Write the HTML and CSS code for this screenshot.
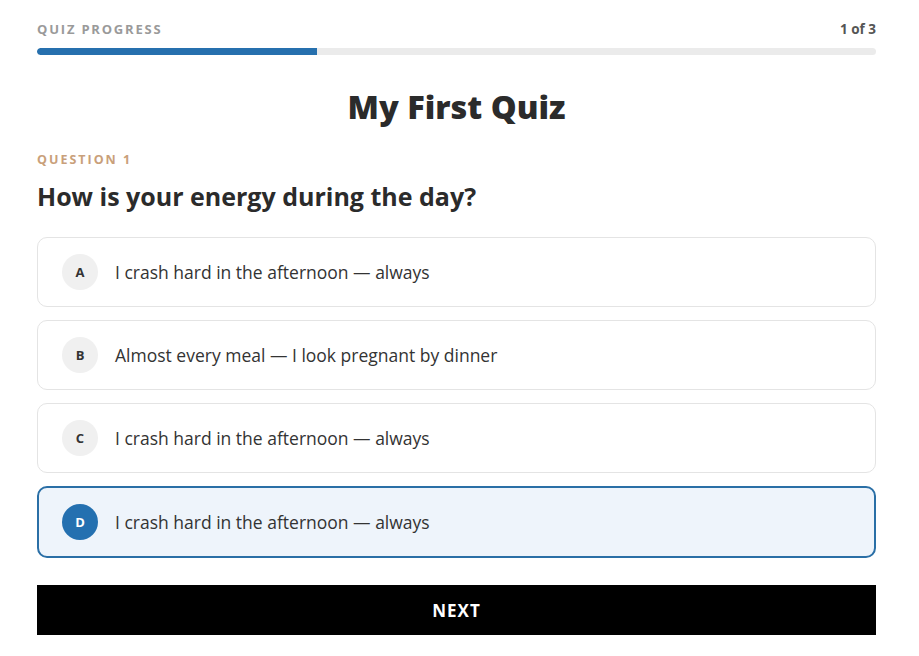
FILE: index.html
```html
<!DOCTYPE html>
<html>
<head>
    <title>My First Quiz</title>
    <link rel="stylesheet" href="styles.css">
</head>
<body>
    <div id="quiz">
        <div class="progress-head">
            <span class="progress-label">QUIZ PROGRESS</span>
            <span class="progress-count">1 of 3</span>
        </div>
        <div class="progress-track">
            <div class="progress-fill" style="width: 33.33%;"></div>
        </div>

        <h1 class="quiz-title">My First Quiz</h1>

        <div class="question-number">QUESTION 1</div>
        <h2 class="question-text">How is your energy during the day?</h2>

        <div class="options">
            <div class="option">
                <span class="badge">A</span>
                <span class="option-text">I crash hard in the afternoon — always</span>
            </div>
            <div class="option">
                <span class="badge">B</span>
                <span class="option-text">Almost every meal — I look pregnant by dinner</span>
            </div>
            <div class="option">
                <span class="badge">C</span>
                <span class="option-text">I crash hard in the afternoon — always</span>
            </div>
            <div class="option selected">
                <span class="badge">D</span>
                <span class="option-text">I crash hard in the afternoon — always</span>
            </div>
        </div>

        <button class="next-btn">NEXT</button>
    </div>
</body>
</html>
```

FILE: styles.css
```css
body {
    font-family: "Open Sans", Arial, sans-serif;
    margin: 0;
    padding: 0;
    background-color: #ffffff;
    color: #2b2b2b;
}
#quiz {
    padding: 20px 43px 20px 37px;
}
.progress-head {
    display: flex;
    justify-content: space-between;
    align-items: center;
    height: 18px;
}
.progress-label {
    font-size: 13px;
    font-weight: 700;
    letter-spacing: 1.8px;
    color: #9a9a9a;
}
.progress-count {
    font-size: 13.5px;
    font-weight: 700;
    color: #555;
}
.progress-track {
    margin-top: 10px;
    height: 7px;
    background-color: #ebebeb;
    border-radius: 4px;
    overflow: hidden;
}
.progress-fill {
    height: 100%;
    background-color: #2670ae;
    border-radius: 4px 0 0 4px;
}
.quiz-title {
    margin: 30px 0 0;
    text-align: center;
    font-size: 32.5px;
    font-weight: 800;
    line-height: 44px;
    color: #2b2b2b;
}
.question-number {
    margin-top: 22px;
    font-size: 12.5px;
    font-weight: 700;
    letter-spacing: 2px;
    color: #c9a07a;
}
.question-text {
    margin: 12px 0 0;
    font-size: 25px;
    font-weight: 700;
    line-height: 32px;
}
.options {
    margin-top: 25px;
    display: flex;
    flex-direction: column;
    gap: 13px;
}
.option {
    display: flex;
    align-items: center;
    gap: 17px;
    height: 70px;
    box-sizing: border-box;
    padding: 0 24px;
    border: 1px solid #e4e4e4;
    border-radius: 10px;
    cursor: pointer;
}
.badge {
    width: 36px;
    height: 36px;
    border-radius: 50%;
    background-color: #f0f0f0;
    color: #333;
    font-size: 13px;
    font-weight: 700;
    display: flex;
    align-items: center;
    justify-content: center;
    flex-shrink: 0;
}
.option-text {
    font-size: 17.5px;
    color: #333;
}
.option.selected {
    height: 72px;
    border: 2px solid #2a6fa6;
    background-color: #eef4fb;
    padding: 0 23px;
}
.option.selected .badge {
    background-color: #2470b0;
    color: #fff;
}
.next-btn {
    display: block;
    width: 100%;
    margin-top: 27px;
    height: 50px;
    border: none;
    background-color: #000;
    color: #fff;
    font-family: inherit;
    font-size: 17px;
    font-weight: 700;
    letter-spacing: 1px;
    cursor: pointer;
}
```
